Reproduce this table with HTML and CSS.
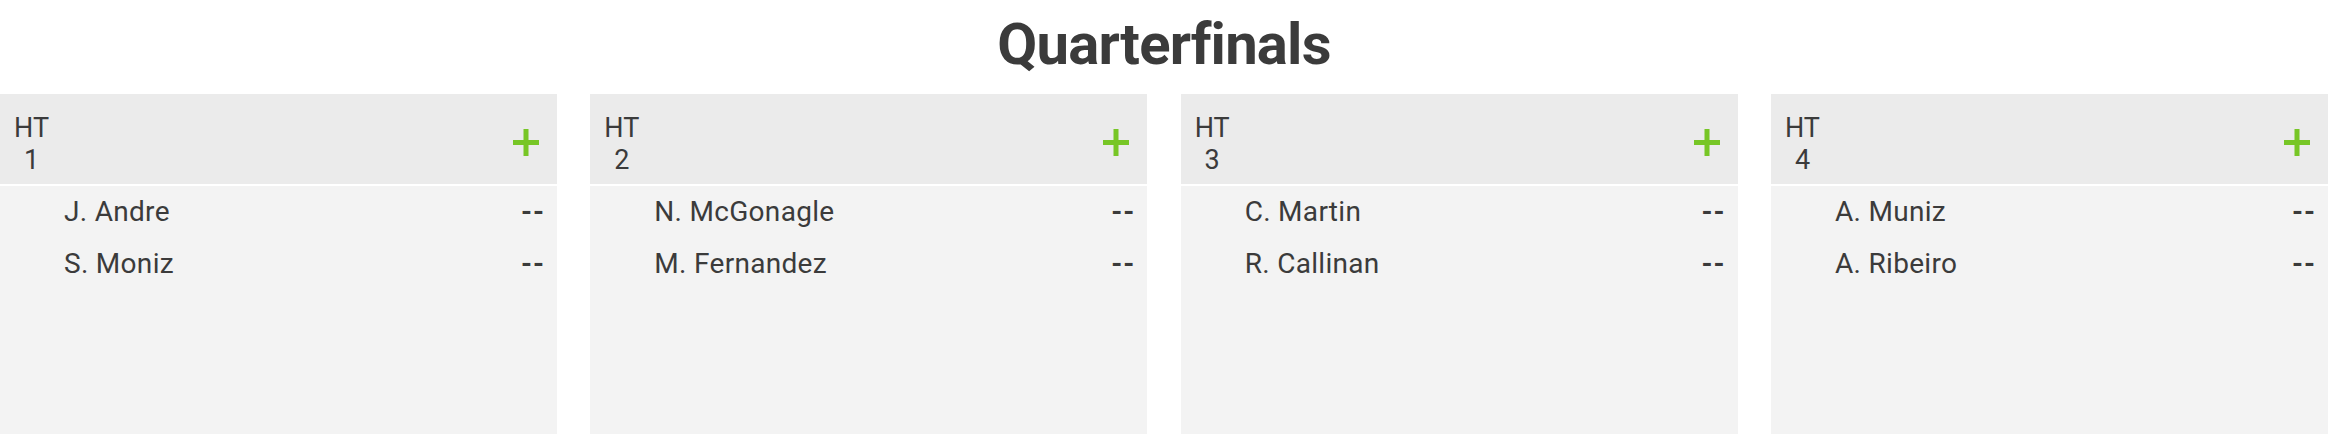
FILE: index.html
```html
<!DOCTYPE html>
<html lang="en">
<head>
<meta charset="utf-8">
<title>Quarterfinals</title>
<link rel="stylesheet" href="styles.css">
</head>
<body>
<div class="page">
  <h1 class="title">Quarterfinals</h1>
  <div class="groups">
    <section class="group">
      <header class="group-head">
        <div class="group-name">HT<br>1</div>
        <button class="add" aria-label="Add"><svg viewBox="0 0 26 27" width="26" height="27"><rect x="10.5" y="0" width="5" height="27"/><rect x="0" y="11" width="26" height="5"/></svg></button>
      </header>
      <ul class="players">
        <li class="player"><span class="name">J. Andre</span><span class="score">--</span></li>
        <li class="player"><span class="name">S. Moniz</span><span class="score">--</span></li>
      </ul>
    </section>
    <section class="group">
      <header class="group-head">
        <div class="group-name">HT<br>2</div>
        <button class="add" aria-label="Add"><svg viewBox="0 0 26 27" width="26" height="27"><rect x="10.5" y="0" width="5" height="27"/><rect x="0" y="11" width="26" height="5"/></svg></button>
      </header>
      <ul class="players">
        <li class="player"><span class="name">N. McGonagle</span><span class="score">--</span></li>
        <li class="player"><span class="name">M. Fernandez</span><span class="score">--</span></li>
      </ul>
    </section>
    <section class="group">
      <header class="group-head">
        <div class="group-name">HT<br>3</div>
        <button class="add" aria-label="Add"><svg viewBox="0 0 26 27" width="26" height="27"><rect x="10.5" y="0" width="5" height="27"/><rect x="0" y="11" width="26" height="5"/></svg></button>
      </header>
      <ul class="players">
        <li class="player"><span class="name">C. Martin</span><span class="score">--</span></li>
        <li class="player"><span class="name">R. Callinan</span><span class="score">--</span></li>
      </ul>
    </section>
    <section class="group">
      <header class="group-head">
        <div class="group-name">HT<br>4</div>
        <button class="add" aria-label="Add"><svg viewBox="0 0 26 27" width="26" height="27"><rect x="10.5" y="0" width="5" height="27"/><rect x="0" y="11" width="26" height="5"/></svg></button>
      </header>
      <ul class="players">
        <li class="player"><span class="name">A. Muniz</span><span class="score">--</span></li>
        <li class="player"><span class="name">A. Ribeiro</span><span class="score">--</span></li>
      </ul>
    </section>
  </div>
</div>
</body>
</html>
```

FILE: styles.css
```css
* { box-sizing: border-box; }
html, body {
  margin: 0;
  padding: 0;
  background: #ffffff;
  overflow: hidden;
}
body {
  font-family: Roboto, "Liberation Sans", Arial, sans-serif;
  color: #3b3b3b;
}
.page {
  width: 2328px;
  height: 434px;
  display: flex;
  flex-direction: column;
}
.title {
  margin: 9px 0 0 0;
  height: 85px;
  font-size: 58px;
  font-weight: 700;
  line-height: 70px;
  letter-spacing: -0.8px;
  text-align: center;
  color: #3b3b3b;
}
.groups {
  flex: 1;
  display: flex;
  justify-content: space-between;
}
.group {
  width: 557px;
  display: flex;
  flex-direction: column;
  gap: 2px;
}
.group-head {
  height: 90px;
  background: #ebebeb;
  display: flex;
  align-items: center;
  justify-content: space-between;
  padding: 0 18px 0 14px;
}
.group-name {
  font-size: 27px;
  line-height: 32px;
  text-align: center;
  padding-top: 10px;
}
.add {
  border: 0;
  background: none;
  padding: 0;
  margin-top: 7px;
  width: 26px;
  height: 27px;
  display: flex;
}
.add svg { fill: #77c626; }
.players {
  flex: 1;
  margin: 0;
  padding: 0;
  list-style: none;
  background: #f3f3f3;
}
.player {
  display: flex;
  justify-content: space-between;
  padding: 0 12px 0 64px;
  font-size: 28px;
  letter-spacing: 0.3px;
  line-height: 52px;
}
.score {
  font-weight: 700;
  letter-spacing: 1px;
}
```
